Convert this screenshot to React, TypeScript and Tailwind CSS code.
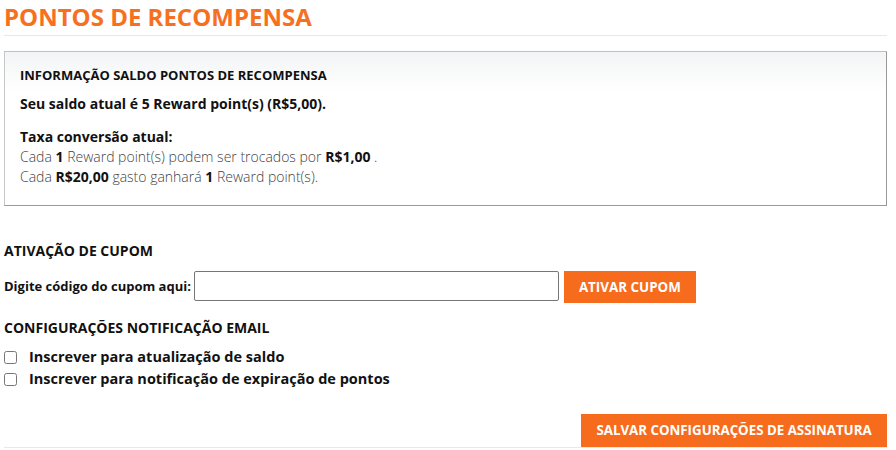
export default function App() {
  return (
    <div className="min-h-screen bg-white pl-[4px] pr-[9px] font-['Open_Sans',sans-serif] text-[#111]">
      <h1 className="border-b border-[#e8e8e8] pb-[3px] pt-[1px] text-[24px] font-bold leading-[31px] text-[#f7701f]">
        PONTOS DE RECOMPENSA
      </h1>

      <section className="mt-[15px] border border-b-[#999] border-l-[#c8c8c8] border-r-[#999] border-t-[#c0c0c0] bg-[linear-gradient(#f3f4f5,#ffffff_40px)] px-[15px] pb-[18px] pt-[13px]">
        <h2 className="text-[13px] font-bold leading-[20px]">
          INFORMAÇÃO SALDO PONTOS DE RECOMPENSA
        </h2>
        <p className="mt-[8px] text-[14px] font-bold leading-[22px]">
          Seu saldo atual é 5 Reward point(s) (R$5,00).
        </p>
        <div className="mt-[12px] text-[14px] font-light leading-[20px] text-[#444]">
          <p className="font-bold text-[#111]">Taxa conversão atual:</p>
          <p>
            Cada <b className="font-bold text-[#111]">1</b> Reward point(s) podem ser trocados por{" "}
            <b className="font-bold text-[#111]">R$1,00</b> .
          </p>
          <p>
            Cada <b className="font-bold text-[#111]">R$20,00</b> gasto ganhará{" "}
            <b className="font-bold text-[#111]">1</b> Reward point(s).
          </p>
        </div>
      </section>

      <h3 className="mt-[35px] text-[14px] font-bold leading-[20px]">ATIVAÇÃO DE CUPOM</h3>
      <div className="mt-[10px] flex items-start gap-[3px]">
        <label className="mt-[6px] text-[13px] font-bold leading-[18px]">
          Digite código do cupom aqui:
        </label>
        <input
          type="text"
          className="h-[30px] w-[365px] rounded-[2px] border border-[#767676] px-2 text-[13px] outline-none"
        />
        <button className="ml-[2px] h-[32px] w-[132px] bg-[#f76b1c] text-[13.4px] font-bold text-white">
          ATIVAR CUPOM
        </button>
      </div>

      <h3 className="mt-[15px] text-[14px] font-bold leading-[20px]">
        CONFIGURAÇÕES NOTIFICAÇÃO EMAIL
      </h3>
      <div className="mt-[9px] flex flex-col gap-[2px] text-[14.5px] font-bold leading-[20px]">
        <label className="flex items-center gap-[12px]">
          <input type="checkbox" className="h-[13px] w-[13px]" />
          Inscrever para atualização de saldo
        </label>
        <label className="flex items-center gap-[12px]">
          <input type="checkbox" className="h-[13px] w-[13px]" />
          Inscrever para notificação de expiração de pontos
        </label>
      </div>

      <div className="mt-[25px] flex justify-end border-b border-[#e8e8e8]">
        <button className="h-[33px] w-[306px] bg-[#f76b1c] text-[13.3px] font-bold text-white">
          SALVAR CONFIGURAÇÕES DE ASSINATURA
        </button>
      </div>
    </div>
  );
}
